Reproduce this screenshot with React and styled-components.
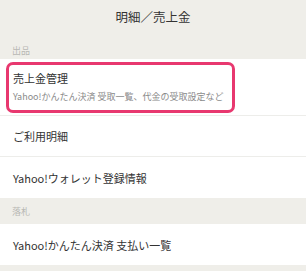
import React from 'react';
import styled, { createGlobalStyle } from 'styled-components';

const GlobalStyle = createGlobalStyle`
  html, body {
    margin: 0;
    padding: 0;
    background: #efeee9;
  }
  body {
    font-family: "Noto Sans CJK JP", "Noto Sans", sans-serif;
    color: #333;
  }
`;

const Page = styled.div`
  width: 306px;
  height: 271px;
  background: #efeee9;
  overflow: hidden;
`;

const Header = styled.div`
  height: 33px;
  display: flex;
  align-items: center;
  justify-content: center;
  font-size: 12.5px;
  color: #333;
`;

const SectionLabel = styled.div`
  height: 26px;
  box-sizing: border-box;
  display: flex;
  align-items: center;
  padding: ${(p) => p.shift}px 0 0 12px;
  font-size: 9px;
  color: #b8b8b4;
`;

const List = styled.div`
  background: #fff;
`;

const Row = styled.div`
  height: 41px;
  box-sizing: border-box;
  display: flex;
  align-items: center;
  padding-left: 13px;
  font-size: 11px;
  color: #333;
  border-bottom: 1px solid #ededea;

  &:last-child {
    border-bottom: none;
  }
`;

const HighlightRow = styled.div`
  height: 57px;
  box-sizing: border-box;
  padding: 3px 0 0 6px;
  border-bottom: 1px solid #ededea;
`;

const Highlight = styled.div`
  width: 229px;
  height: 51px;
  box-sizing: border-box;
  border: 3px solid #e8386f;
  border-radius: 7px;
  padding: 6px 0 0 4px;
  display: flex;
  flex-direction: column;
  gap: 5px;
`;

const Title = styled.div`
  font-size: 11px;
  color: #333;
  line-height: 14px;
`;

const Sub = styled.div`
  font-size: 9px;
  color: #8a8a8a;
  line-height: 13px;
  white-space: nowrap;
`;

export default function App() {
  return (
    <Page>
      <GlobalStyle />
      <Header>明細／売上金</Header>
      <SectionLabel shift={8}>出品</SectionLabel>
      <List>
        <HighlightRow>
          <Highlight>
            <Title>売上金管理</Title>
            <Sub>Yahoo!かんたん決済 受取一覧、代金の受取設定など</Sub>
          </Highlight>
        </HighlightRow>
        <Row>ご利用明細</Row>
        <Row>Yahoo!ウォレット登録情報</Row>
      </List>
      <SectionLabel shift={0}>落札</SectionLabel>
      <List>
        <Row>Yahoo!かんたん決済 支払い一覧</Row>
      </List>
    </Page>
  );
}
